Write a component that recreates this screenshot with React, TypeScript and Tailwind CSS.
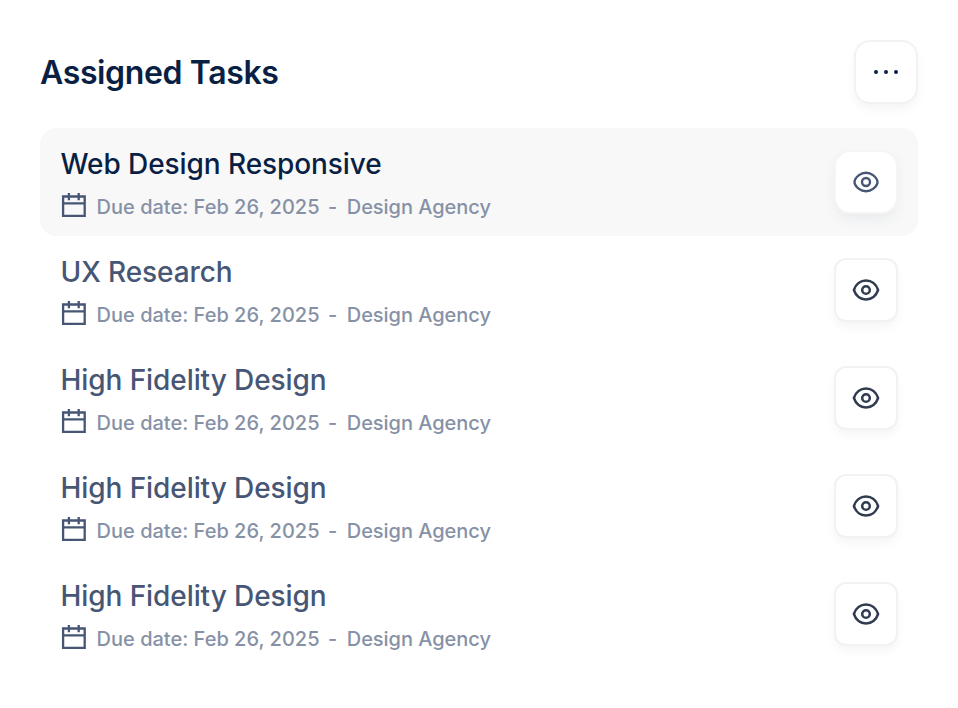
const tasks = ['Web Design Responsive', 'UX Research', 'High Fidelity Design', 'High Fidelity Design', 'High Fidelity Design'];

function CalendarIcon() {
  return (
    <svg className="-mt-1 h-[26px] w-[26px] shrink-0" viewBox="0 0 26 26" fill="none" stroke="#465674" strokeWidth="2.3">
      <path d="M2.100 4.500H23.700V23.800H2.100ZM2.100 11.300H23.700M7.900 1V8.200M17.700 1V8.200" />
    </svg>
  );
}

function EyeIcon({ active }: { active: boolean }) {
  return active ? (
    <svg className="h-6 w-7" viewBox="0 0 28 24" fill="none" stroke="#465674" strokeWidth="2.4">
      <path d="M2.500 12C2.500 9.500 4.600 7 7 5.100C11 1.900 17 1.900 21 5.100C23.400 7 25.500 9.500 25.500 12S23.400 17 21 18.900C17 22.100 11 22.100 7 18.900C4.600 17 2.500 14.500 2.500 12Z" />
      <circle cx="14" cy="12" r="4" />
    </svg>
  ) : (
    <svg className="h-6 w-7" viewBox="0 0 28 24" fill="none" stroke="#303b50" strokeWidth="2.5" strokeLinejoin="round">
      <path d="M1.900 12C3.800 6.200 8.500 2.500 14 2.500S24.200 6.200 26.100 12C24.200 17.800 19.500 21.500 14 21.500S3.800 17.800 1.900 12Z" />
      <circle cx="14" cy="12" r="3.800" />
    </svg>
  );
}

export default function App() {
  return (
    <main className="h-[708px] w-[958px] bg-white px-10 pt-10 font-[Inter,sans-serif]">
      <header className="flex h-16 items-center justify-between">
        <h1 className="pt-0.5 text-[32px] font-semibold leading-10 tracking-[-0.37px] text-[#0a1f44]">Assigned Tasks</h1>
        <button aria-label="More" className="flex size-16 items-center justify-center gap-1.5 rounded-2xl border-2 border-[#f2f2f2] bg-white shadow-[0_6px_12px_-2px_rgba(0,0,0,0.05)]">
          {[0, 1, 2].map((i) => <span key={i} className="size-1 rounded-full bg-[#0a1f44]" />)}
        </button>
      </header>
      <ul className="mt-6">
        {tasks.map((title, i) => (
          <li key={i} className={`flex h-[108px] items-center justify-between rounded-2xl px-5 ${i === 0 ? 'bg-[#f8f8f8]' : ''}`}>
            <div className="pl-px pt-[3px]">
              <h2 className={`-ml-[0.5px] text-[28px] font-medium leading-9 tracking-[-0.08px] ${i === 0 ? 'text-[#0a1f44]' : 'text-[#465674]'}`}>{title}</h2>
              <p className="mt-[11px] flex h-7 items-center text-xl font-medium text-[#8791a6]">
                <CalendarIcon />
                <span className="ml-[9.600px]">Due date: Feb 26, 2025</span><span className="ml-[8.500px]">-</span><span className="ml-[9.500px] tracking-[-0.04px]">Design Agency</span>
              </p>
            </div>
            <button aria-label="View task" className={`flex size-16 items-center justify-center border-2 bg-white bg-clip-padding ${i === 0 ? 'rounded-2xl border-[#f5f5f6] shadow-[0_6px_12px_-1px_rgba(70,86,116,0.08)]' : 'rounded-xl border-[#f2f2f2] shadow-[0_6px_12px_-2px_rgba(0,0,0,0.05)]'}`}>
              <EyeIcon active={i === 0} />
            </button>
          </li>
        ))}
      </ul>
    </main>
  );
}
